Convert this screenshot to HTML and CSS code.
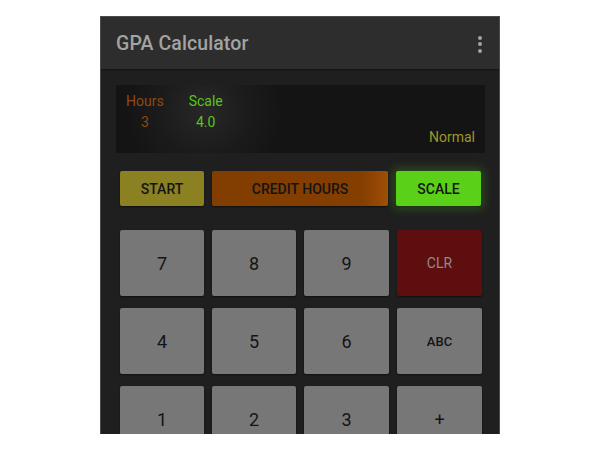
FILE: index.html
```html
<!DOCTYPE html>
<html>
<head>
<meta charset="utf-8">
<link rel="stylesheet" href="styles.css">
</head>
<body>
<div class="phone">
  <div class="toolbar">
    <span class="title">GPA Calculator</span>
    <span class="menu"><i></i><i></i><i></i></span>
  </div>
  <div class="content">
    <div class="display">
      <div class="fields">
        <div class="field hours"><div class="lbl">Hours</div><div class="val">3</div></div>
        <div class="field scale"><div class="lbl">Scale</div><div class="val">4.0</div></div>
      </div>
      <div class="mode">Normal</div>
    </div>
    <div class="modes">
      <div class="mbtn start">START</div>
      <div class="mbtn credit">CREDIT HOURS</div>
      <div class="mbtn scalebtn">SCALE</div>
    </div>
    <div class="keys">
      <div class="key">7</div><div class="key">8</div><div class="key">9</div><div class="key clr">CLR</div>
      <div class="key">4</div><div class="key">5</div><div class="key">6</div><div class="key small">ABC</div>
      <div class="key">1</div><div class="key">2</div><div class="key">3</div><div class="key">+</div>
    </div>
  </div>
</div>
</body>
</html>
```
FILE: styles.css
```css
html, body { margin: 0; padding: 0; background: #fff; }
body { font-family: Roboto, "Liberation Sans", sans-serif; }
.phone {
  margin: 16px 0 0 100px;
  width: 400px;
  height: 418px;
  box-sizing: border-box;
  background: #1f1f1f;
  border: 1px solid #4a4a4a;
  border-bottom: none;
  overflow: hidden;
}
.toolbar {
  height: 52px;
  background: #2d2d2d;
  display: flex;
  align-items: center;
  justify-content: space-between;
  padding: 0 17px 0 15px;
  box-shadow: 0 1px 2px rgba(0,0,0,0.4);
}
.title { color: #a3a3a3; font-size: 19.5px; font-weight: 500; letter-spacing: 0.1px; }
.menu { display: flex; flex-direction: column; gap: 2.5px; padding-top: 2px; }
.menu i { display: block; width: 4px; height: 4px; border-radius: 50%; background: #a3a3a3; }
.content { padding: 16px 14px 0 15px; }
.display {
  height: 68px;
  background: radial-gradient(circle at 88px 24px, #282828 0, #1b1b1b 45px, #141414 80px);
  position: relative;
  padding: 6px 10px 0 10px;
  box-sizing: border-box;
}
.fields { display: flex; gap: 25px; }
.field { text-align: center; font-size: 14px; line-height: 21px; }
.hours { color: #8d4a12; }
.scale { color: #5cc41c; }
.mode { position: absolute; right: 10px; bottom: 8px; color: #9e962a; font-size: 14px; }
.modes { display: flex; gap: 8px; margin: 18px 4px 0 4px; height: 35px; }
.mbtn {
  display: flex; align-items: center; justify-content: center;
  font-size: 14px; font-weight: 500; color: #141414;
  border-radius: 2px;
  box-shadow: 0 1px 2px rgba(0,0,0,0.5);
}
.start { width: 84px; background: #8b8022; }
.credit { flex: 1; background: linear-gradient(90deg, #823d00 0, #843e00 85%, #a04e05 100%); }
.scalebtn { width: 85px; background: #5bd018; box-shadow: 0 0 10px 3px rgba(90,210,30,0.25), 0 1px 2px rgba(0,0,0,0.5); }
.keys {
  display: grid;
  grid-template-columns: 84px 84px 85px 85px;
  grid-auto-rows: 66px;
  column-gap: 8px;
  row-gap: 12px;
  margin: 24px 0 0 4px;
}
.key {
  background: #777;
  border-radius: 2px;
  display: flex; align-items: center; justify-content: center;
  color: #141414; font-size: 18px; font-weight: 400;
  box-shadow: 0 1px 2px rgba(0,0,0,0.5);
}
.key.small { font-size: 13px; font-weight: 500; }
.key.clr { background: #5e0e0e; color: #8c8c8c; font-size: 14px; }
```
